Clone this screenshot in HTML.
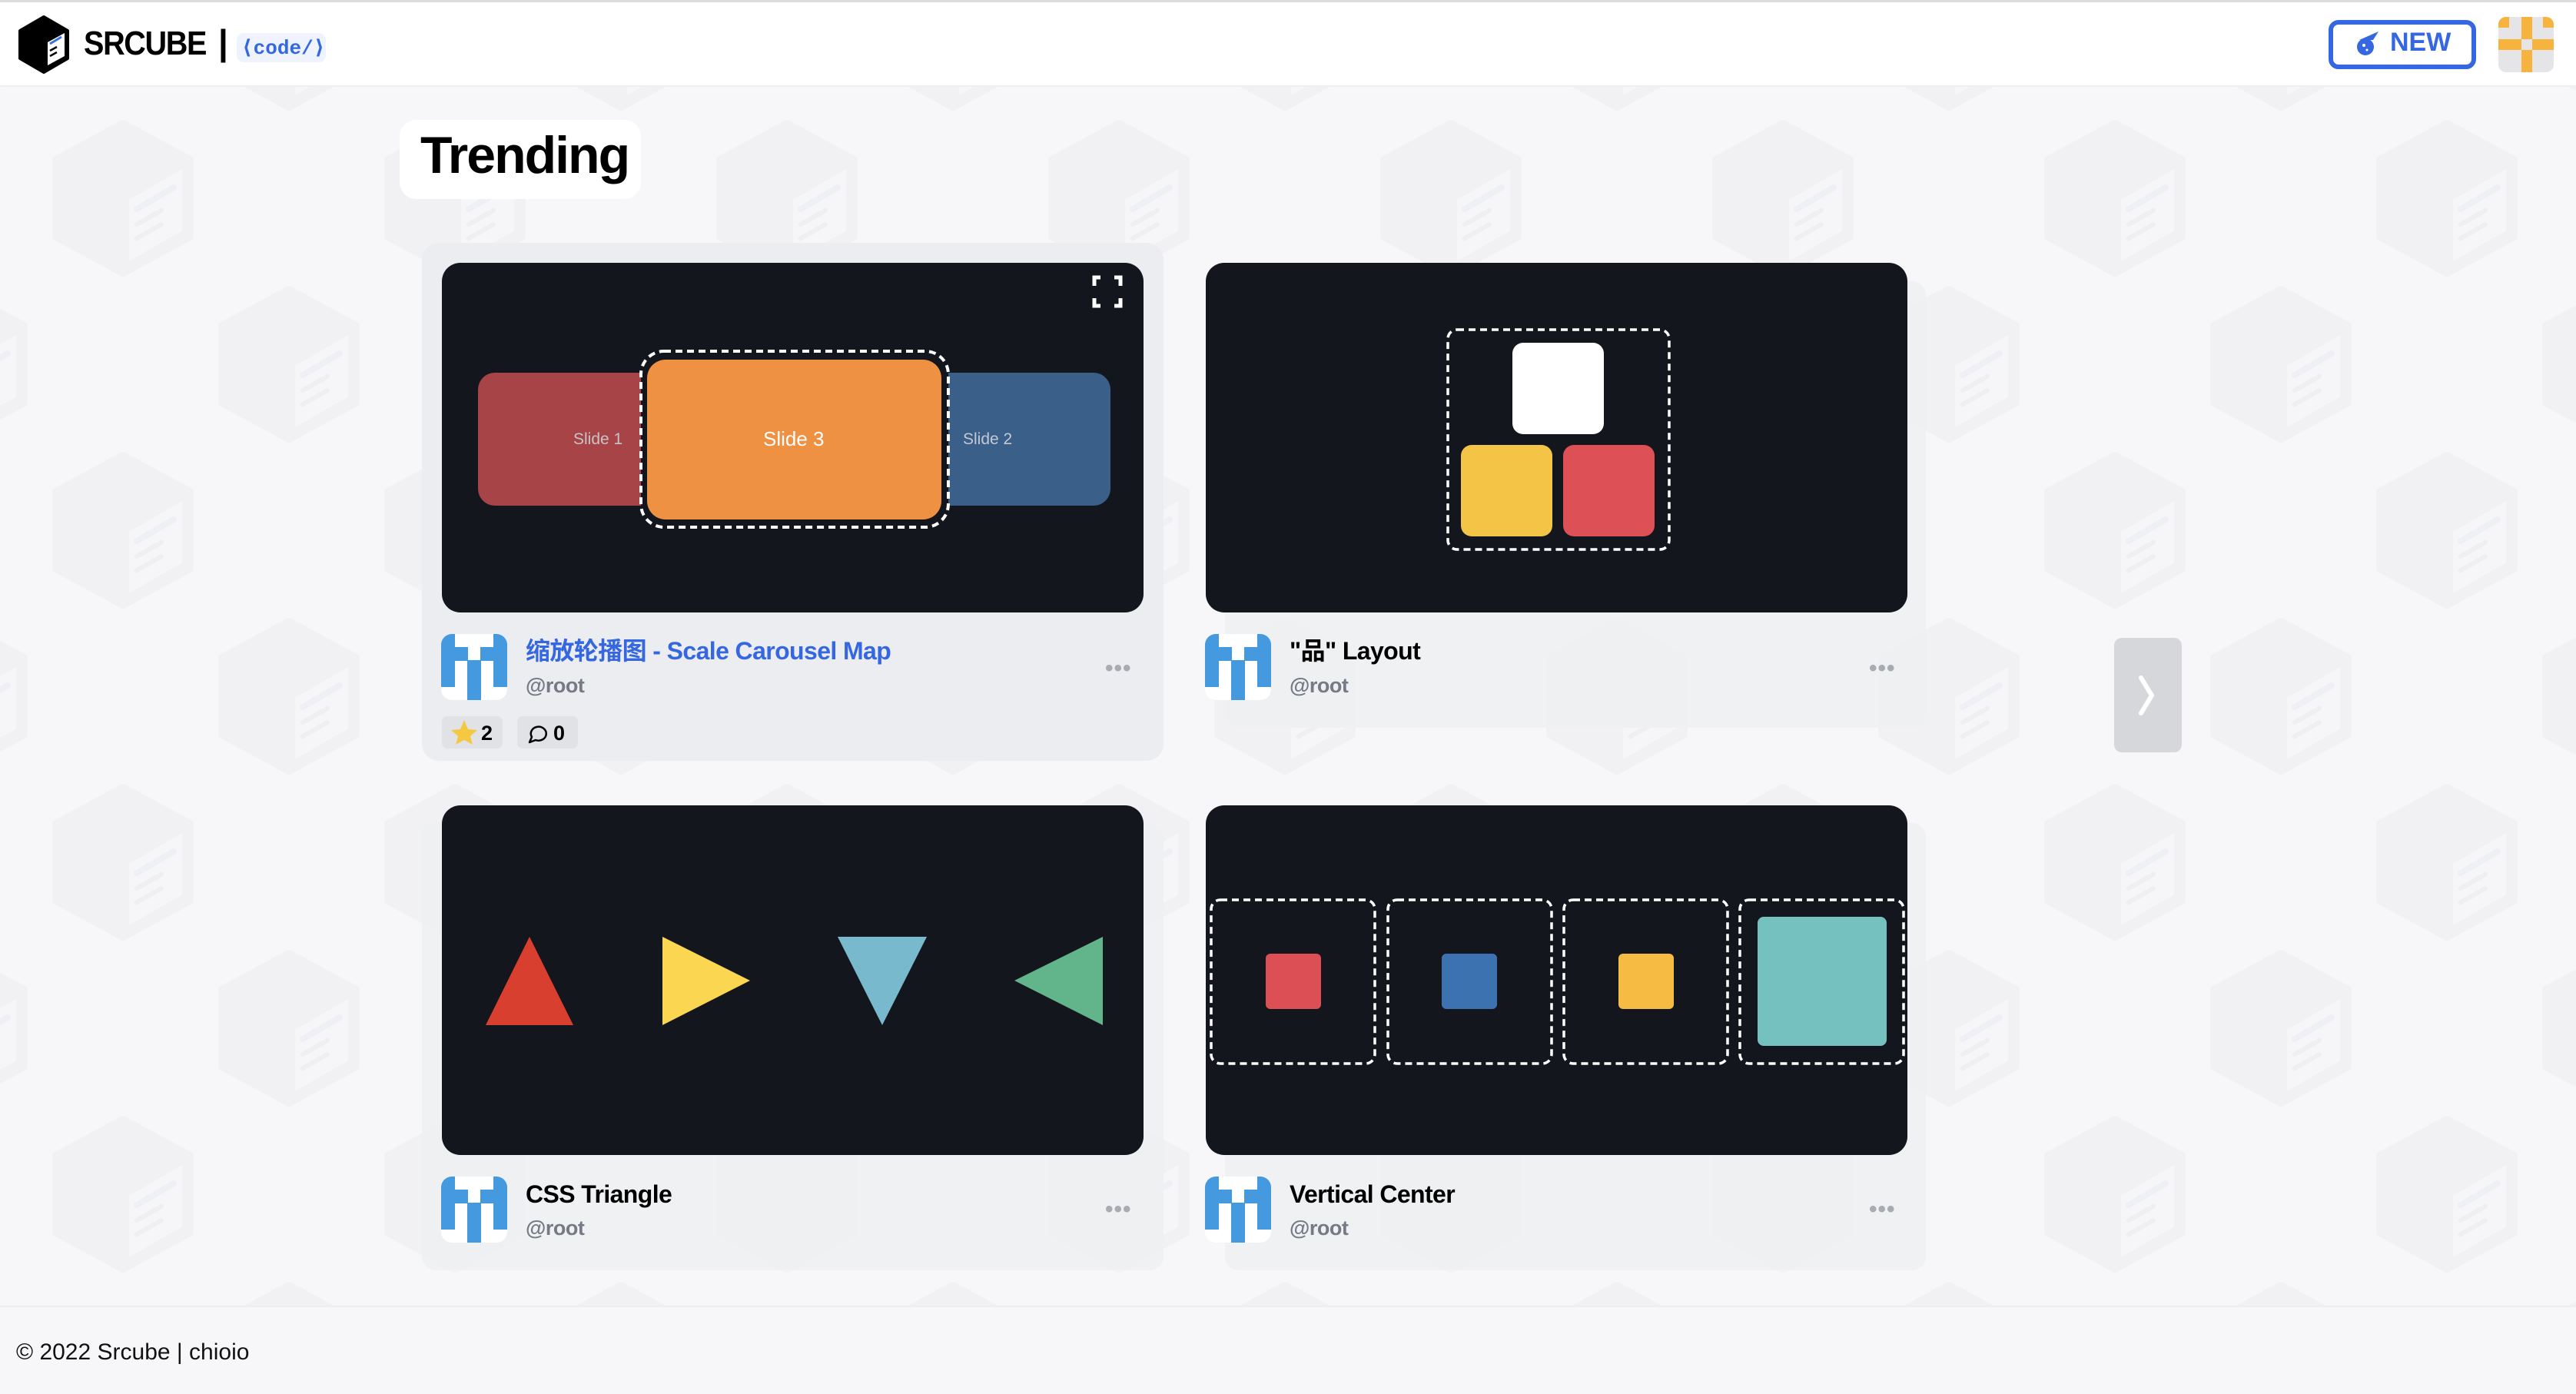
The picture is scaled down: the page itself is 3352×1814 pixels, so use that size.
<!DOCTYPE html>
<html><head><meta charset="utf-8">
<style>
html,body{margin:0;padding:0}
body{width:3352px;height:1814px;position:relative;overflow:hidden;background:#f7f7f9;font-family:"Liberation Sans","Noto Sans CJK SC",sans-serif}
.abs{position:absolute}
.t{position:absolute;white-space:nowrap}
.title{font-size:32px;font-weight:bold;color:#000;letter-spacing:-0.6px}
.user{font-size:27px;font-weight:bold;color:#767a85;letter-spacing:-0.5px}
.dots{font-size:30px;color:#a8abb2;font-weight:bold;letter-spacing:1px}
</style></head><body>
<svg class="abs" style="left:0;top:0" width="3352" height="1814" xmlns="http://www.w3.org/2000/svg">
<defs>
<g id="hx">
<polygon points="0,-97 87,-50 87,50 0,97 -87,50 -87,-50" fill="#f1f1f3" stroke="#f1f1f3" stroke-width="10" stroke-linejoin="round"/>
<polygon points="8,2 77,-38 77,42 8,82" fill="#f6f6f8"/>
<line x1="18" y1="14" x2="66" y2="-14" stroke="#eff0f5" stroke-width="8" stroke-linecap="round"/>
<line x1="18" y1="34" x2="50" y2="16" stroke="#efeff1" stroke-width="6" stroke-linecap="round"/>
<line x1="18" y1="52" x2="50" y2="34" stroke="#efeff1" stroke-width="6" stroke-linecap="round"/>
</g>
<pattern id="p" patternUnits="userSpaceOnUse" x="52" y="150" width="432" height="432">
<use href="#hx" x="108" y="108"/>
<use href="#hx" x="324" y="324"/>
<use href="#hx" x="540" y="324"/>
<use href="#hx" x="-108" y="324"/>
<use href="#hx" x="324" y="-108"/>
<use href="#hx" x="108" y="540"/>
<use href="#hx" x="324" y="540"/>
</pattern>
</defs>
<rect x="0" y="112" width="3352" height="1590" fill="url(#p)"/>
<rect x="0" y="0" width="3352" height="112" fill="#fff"/>
<rect x="0" y="0" width="3352" height="3" fill="#dcdcde"/>
<rect x="0" y="111" width="3352" height="2" fill="#eceef1"/>
<polygon points="57,22 88,40 88,76 57,94 26,76 26,40" fill="#000" stroke="#000" stroke-width="4" stroke-linejoin="round"/>
<polygon points="62,55 84,43 84,73 62,85" fill="#fff"/>
<line x1="65" y1="57" x2="80" y2="48" stroke="#3b6fe0" stroke-width="3"/>
<line x1="65" y1="66" x2="74" y2="61" stroke="#000" stroke-width="2.5"/>
<line x1="65" y1="73" x2="74" y2="68" stroke="#000" stroke-width="2.5"/>
<rect x="308" y="43" width="116" height="38" rx="9" fill="#eef3fd"/>
<rect x="3033" y="29" width="186" height="58" rx="10" fill="#fff" stroke="#3568e0" stroke-width="6"/>
<circle cx="3078" cy="61" r="11" fill="#3568e0"/>
<path d="M3070 52 L3095 41 L3088 52 Z" fill="#3568e0"/>
<circle cx="3076" cy="59" r="2" fill="#fff"/><circle cx="3080" cy="65" r="1.5" fill="#fff"/>
<clipPath id="ca"><rect x="3251" y="22" width="72" height="72" rx="10"/></clipPath>
<g clip-path="url(#ca)">
<rect x="3251" y="22" width="72" height="72" fill="#e5e5e8"/>
<rect x="3281" y="22" width="14" height="72" fill="#f6b43f"/>
<rect x="3251" y="51" width="72" height="14" fill="#f6b43f"/>
<rect x="3281" y="51" width="14" height="14" fill="#e5e5e8"/>
<rect x="3251" y="22" width="14" height="14" fill="#f6b43f"/>
<rect x="3309" y="22" width="14" height="14" fill="#f6b43f"/>
</g>
<rect x="520" y="156" width="314" height="103" rx="22" fill="#fff"/>
<rect x="549" y="316" width="965" height="674" rx="22" fill="#ecedf0"/>
<rect x="1594" y="366" width="912" height="581" rx="18" fill="#eeeff1" opacity="0.9"/>
<rect x="549" y="1071" width="965" height="582" rx="18" fill="#eeeff1" opacity="0.9"/>
<rect x="1594" y="1071" width="912" height="582" rx="18" fill="#eeeff1" opacity="0.9"/>
<rect x="575" y="342" width="913" height="455" rx="24" fill="#13161d"/>
<rect x="1569" y="342" width="913" height="455" rx="24" fill="#13161d"/>
<rect x="575" y="1048" width="913" height="455" rx="24" fill="#13161d"/>
<rect x="1569" y="1048" width="913" height="455" rx="24" fill="#13161d"/>
<rect x="622" y="485" width="260" height="173" rx="22" fill="#a64448"/>
<rect x="1185" y="485" width="260" height="173" rx="22" fill="#3a5f89"/>
<rect x="834" y="457" width="400" height="229" rx="30" fill="#13161d" stroke="#fff" stroke-width="4" stroke-dasharray="9 6"/>
<rect x="842" y="468" width="383" height="208" rx="24" fill="#ee9142"/>
<path d="M1424 372 V361 H1432 M1450 361 H1458 V372 M1424 388 V398 H1432 M1450 398 H1458 V388" fill="none" stroke="#fff" stroke-width="5"/>
<rect x="1884" y="429" width="288" height="286" rx="12" fill="none" stroke="#fff" stroke-width="3.5" stroke-dasharray="9 6"/>
<rect x="1968" y="446" width="119" height="119" rx="14" fill="#fff"/>
<rect x="1901" y="579" width="119" height="119" rx="14" fill="#f4c447"/>
<rect x="2034" y="579" width="119" height="119" rx="14" fill="#dd5056"/>
<polygon points="632,1334 746,1334 689,1219" fill="#d93f2f"/>
<polygon points="862,1219 976,1276 862,1334" fill="#fbd650"/>
<polygon points="1090,1219 1206,1219 1148,1334" fill="#78b9ce"/>
<polygon points="1435,1219 1320,1276 1435,1334" fill="#62b48b"/>
<g fill="none" stroke="#fff" stroke-width="3.5" stroke-dasharray="9 6">
<rect x="1576" y="1171" width="213" height="213" rx="12"/>
<rect x="1806" y="1171" width="213" height="213" rx="12"/>
<rect x="2035" y="1171" width="213" height="213" rx="12"/>
<rect x="2264" y="1171" width="213" height="213" rx="12"/>
</g>
<rect x="1647" y="1241" width="72" height="72" rx="6" fill="#dc4f55"/>
<rect x="1876" y="1241" width="72" height="72" rx="6" fill="#3d72b0"/>
<rect x="2106" y="1241" width="72" height="72" rx="6" fill="#f5bb42"/>
<rect x="2287" y="1193" width="168" height="168" rx="8" fill="#74c1c0"/>
<defs>
<g id="av">
<rect x="0" y="0" width="86" height="86" rx="14" fill="#fff"/>
<clipPath id="cav"><rect x="0" y="0" width="86" height="86" rx="14"/></clipPath>
<g clip-path="url(#cav)" fill="#4499df">
<rect x="0" y="0" width="18" height="69"/>
<rect x="68" y="0" width="18" height="69"/>
<rect x="18" y="17" width="17" height="18"/>
<rect x="51" y="17" width="17" height="18"/>
<rect x="34" y="34" width="18" height="52"/>
</g>
</g>
</defs>
<use href="#av" x="574" y="825"/>
<use href="#av" x="1568" y="825"/>
<use href="#av" x="574" y="1531"/>
<use href="#av" x="1568" y="1531"/>
<rect x="575" y="932" width="79" height="42" rx="7" fill="#e1e2e6"/>
<rect x="673" y="932" width="79" height="42" rx="7" fill="#e1e2e6"/>
<polygon points="604,937 609,949 621,950 612,958 615,969 604,963 593,969 596,958 587,950 599,949" fill="#f5c842"/>
<path d="M689 966 L692 959 A10 9 0 1 1 697 963 Z" fill="none" stroke="#000" stroke-width="2.5" stroke-linejoin="round"/>
<rect x="2751" y="830" width="88" height="149" rx="10" fill="#d6d7db"/>
<path d="M2786 882 L2800 905 L2786 928" fill="none" stroke="#fff" stroke-width="6" stroke-linecap="round" stroke-linejoin="round"/>
<rect x="0" y="1700" width="3352" height="114" fill="#f7f7f9"/>
<rect x="0" y="1699" width="3352" height="2" fill="#eceef2"/>
</svg>

<div class="t" style="left:109px;top:32px;font-size:44px;font-weight:bold;letter-spacing:-1.5px;transform:scaleX(0.9);transform-origin:left">SRCUBE</div>
<div class="t" style="left:284px;top:28px;font-size:46px;font-weight:bold">|</div>
<div class="t" style="left:314px;top:47px;font-size:26px;color:#3568e0;font-family:'Liberation Mono',monospace;font-weight:bold">&lang;code/&rang;</div>
<div class="t" style="left:3110px;top:36px;font-size:34px;font-weight:bold;color:#3568e0">NEW</div>

<div class="t" style="left:547px;top:163px;font-size:68px;font-weight:bold;letter-spacing:-2px">Trending</div>

<div class="t title" style="left:684px;top:822px;color:#3568e0">缩放轮播图 - Scale Carousel Map</div>
<div class="t user" style="left:684px;top:877px">@root</div>
<div class="t dots" style="left:1438px;top:853px">•••</div>
<div class="t" style="left:626px;top:939px;font-size:27px;font-weight:bold">2</div>
<div class="t" style="left:720px;top:939px;font-size:27px;font-weight:bold">0</div>

<div class="t title" style="left:1678px;top:822px">"品" Layout</div>
<div class="t user" style="left:1678px;top:877px">@root</div>
<div class="t dots" style="left:2432px;top:853px">•••</div>

<div class="t title" style="left:684px;top:1536px">CSS Triangle</div>
<div class="t user" style="left:684px;top:1583px">@root</div>
<div class="t dots" style="left:1438px;top:1557px">•••</div>

<div class="t title" style="left:1678px;top:1536px">Vertical Center</div>
<div class="t user" style="left:1678px;top:1583px">@root</div>
<div class="t dots" style="left:2432px;top:1557px">•••</div>

<div class="t" style="left:746px;top:560px;font-size:21px;color:#c9c3c4">Slide 1</div>
<div class="t" style="left:993px;top:556px;font-size:26px;color:#fff">Slide 3</div>
<div class="t" style="left:1253px;top:560px;font-size:21px;color:#c3c9d2">Slide 2</div>

<div class="t" style="left:21px;top:1743px;font-size:30px;color:#111">© 2022 Srcube | chioio</div>
</body></html>
